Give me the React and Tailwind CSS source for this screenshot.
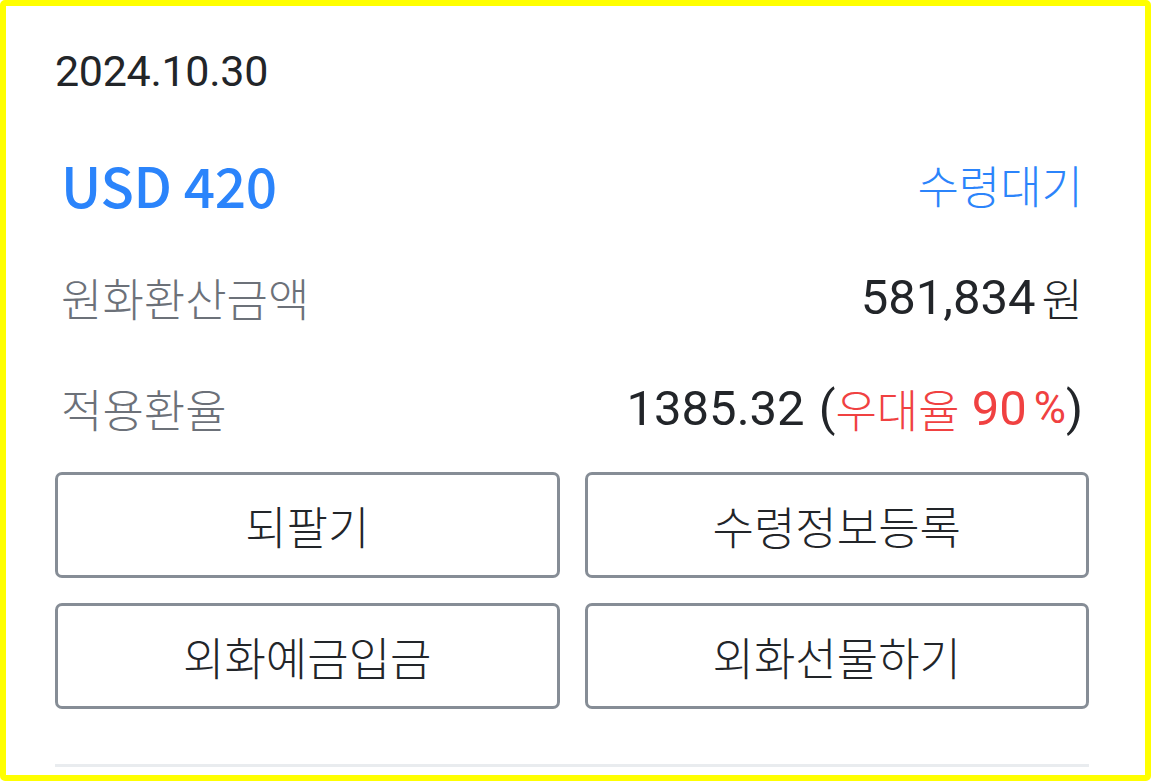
const buttons = ["되팔기", "수령정보등록", "외화예금입금", "외화선물하기"];

const App = () => {
  return (
    <main
      className="w-[1151px] h-[781px] border-[6px] border-[#ffff00] rounded-[5px] bg-white px-[49px] pr-[56px] text-[#222529]"
      style={{ fontFamily: '"Roboto", "Noto Sans CJK KR", sans-serif' }}
    >
      {/* Date */}
      <div className="h-[130px] flex items-center text-[43px] leading-none tracking-[-0.3px]">
        2024.10.30
      </div>

      {/* Amount / status */}
      <div className="h-[96px] flex items-center justify-between px-[6px] text-[#2b84fb]">
        <span className="text-[55px] font-medium leading-none tracking-[-0.3px] [font-family:'Noto_Sans_CJK_KR',sans-serif]">
          USD 420
        </span>
        <span className="text-[45px] font-light leading-none [font-family:'Noto_Sans_CJK_KR',sans-serif]">
          수령대기
        </span>
      </div>

      {/* KRW amount */}
      <div className="h-[130px] flex items-center justify-between px-[6px]">
        <span className="text-[45px] font-light leading-none text-[#6c7179] [font-family:'Noto_Sans_CJK_KR',sans-serif]">
          원화환산금액
        </span>
        <span className="text-[49px] leading-none flex items-center">
          581,834
          <span className="ml-[6px] text-[45px] font-light [font-family:'Noto_Sans_CJK_KR',sans-serif]">원</span>
        </span>
      </div>

      {/* Rate */}
      <div className="h-[92px] flex items-center justify-between px-[6px]">
        <span className="text-[45px] font-light leading-none text-[#6c7179] [font-family:'Noto_Sans_CJK_KR',sans-serif]">
          적용환율
        </span>
        <span className="text-[49px] leading-none flex items-center">
          1385.32
          <span className="ml-[14px]">(</span>
          <span className="text-[#f04141] text-[45px] font-light [font-family:'Noto_Sans_CJK_KR',sans-serif]">우대율</span>
          <span className="text-[#f04141] ml-[12px]">90</span>
          <span className="text-[#f04141] ml-[7px] text-[44px]">%</span>
          <span>)</span>
        </span>
      </div>

      {/* Actions */}
      <div className="mt-[18px] grid grid-cols-2 gap-x-[25px] gap-y-[25px]">
        {buttons.map((label) => (
          <button
            key={label}
            className="h-[106px] border-[3px] border-[#868d96] rounded-[7px] flex items-center justify-center text-[45px] font-light leading-none text-[#222529] [font-family:'Noto_Sans_CJK_KR',sans-serif]"
          >
            {label}
          </button>
        ))}
      </div>

      <div className="mt-[55px] h-[3px] bg-[#e9ecef]" />
    </main>
  );
};

export default App;
